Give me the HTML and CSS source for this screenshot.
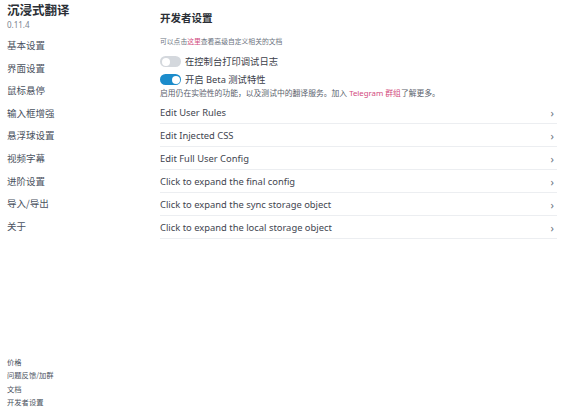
FILE: index.html
```html
<!DOCTYPE html>
<html lang="zh">
<head>
<meta charset="utf-8">
<link rel="stylesheet" href="styles.css">
</head>
<body>
<div class="app">
  <aside class="sidebar">
    <div class="brand">沉浸式翻译</div>
    <div class="version">0.11.4</div>
    <nav class="menu">
      <div class="menu-item">基本设置</div>
      <div class="menu-item">界面设置</div>
      <div class="menu-item">鼠标悬停</div>
      <div class="menu-item">输入框增强</div>
      <div class="menu-item">悬浮球设置</div>
      <div class="menu-item">视频字幕</div>
      <div class="menu-item">进阶设置</div>
      <div class="menu-item">导入/导出</div>
      <div class="menu-item">关于</div>
    </nav>
    <div class="foot">
      <div class="foot-item">价格</div>
      <div class="foot-item">问题反馈/加群</div>
      <div class="foot-item">文档</div>
      <div class="foot-item">开发者设置</div>
    </div>
  </aside>
  <main class="main">
    <h1 class="title">开发者设置</h1>
    <p class="hint">可以点击<span class="link">这里</span>查看高级自定义相关的文档</p>
    <label class="toggle-row">
      <span class="switch"><span class="knob"></span></span>
      <span>在控制台打印调试日志</span>
    </label>
    <label class="toggle-row">
      <span class="switch on"><span class="knob"></span></span>
      <span>开启 Beta 测试特性</span>
    </label>
    <p class="desc">启用仍在实验性的功能，以及测试中的翻译服务。加入 <span class="link">Telegram 群组</span>了解更多。</p>
    <div class="rows">
      <div class="row"><span>Edit User Rules</span><span class="chev">&#8250;</span></div>
      <div class="row"><span>Edit Injected CSS</span><span class="chev">&#8250;</span></div>
      <div class="row"><span>Edit Full User Config</span><span class="chev">&#8250;</span></div>
      <div class="row"><span>Click to expand the final config</span><span class="chev">&#8250;</span></div>
      <div class="row"><span>Click to expand the sync storage object</span><span class="chev">&#8250;</span></div>
      <div class="row"><span>Click to expand the local storage object</span><span class="chev">&#8250;</span></div>
    </div>
  </main>
</div>
</body>
</html>
```

FILE: styles.css
```css
html, body {
  margin: 0;
  padding: 0;
  background: #fff;
}
body {
  font-family: "Noto Sans", "Noto Sans CJK SC", sans-serif;
  color: #373c44;
}
.app {
  display: flex;
  width: 563px;
  height: 414px;
}
.sidebar {
  width: 153px;
  padding: 2px 0 4px 7px;
  box-sizing: border-box;
  display: flex;
  flex-direction: column;
}
.brand {
  font-family: "Noto Sans CJK SC", sans-serif;
  font-weight: 700;
  font-size: 12.5px;
  line-height: 16px;
  color: #2b2f36;
}
.version {
  font-size: 8px;
  line-height: 12px;
  color: #7b8490;
  margin-top: 1px;
}
.menu {
  display: flex;
  flex-direction: column;
  margin-top: 3px;
}
.menu-item {
  font-family: "Noto Sans CJK SC", sans-serif;
  font-size: 9.5px;
  line-height: 22.6px;
  color: #4a5260;
}
.foot {
  margin-top: auto;
  display: flex;
  flex-direction: column;
}
.foot-item {
  font-family: "Noto Sans CJK SC", sans-serif;
  font-size: 7.3px;
  line-height: 13.6px;
  color: #4a5260;
}
.main {
  flex: 1;
  padding: 10px 6px 0 7px;
  display: flex;
  flex-direction: column;
}
.title {
  margin: 0;
  font-family: "Noto Sans CJK SC", sans-serif;
  font-size: 10.5px;
  font-weight: 700;
  line-height: 16px;
  color: #2b2f36;
}
.hint {
  margin: 10px 0 0;
  font-family: "Noto Sans CJK SC", sans-serif;
  font-size: 6.8px;
  line-height: 10px;
  color: #6b7380;
}
.link {
  color: #d24b7e;
}
.toggle-row {
  display: flex;
  align-items: center;
  gap: 4px;
  font-family: "Noto Sans", "Noto Sans CJK SC", sans-serif;
  font-size: 9.3px;
  line-height: 13px;
  color: #3b4049;
  margin-top: 9px;
}
.toggle-row + .toggle-row {
  margin-top: 5px;
}
.switch {
  width: 21px;
  height: 11px;
  border-radius: 6px;
  background: #d4d8dd;
  display: flex;
  align-items: center;
  padding: 0 1.5px;
  box-sizing: border-box;
}
.knob {
  width: 8px;
  height: 8px;
  border-radius: 50%;
  background: #fff;
}
.switch.on {
  background: #1c8ccb;
  justify-content: flex-end;
}
.desc {
  margin: 2px 0 0;
  font-family: "Noto Sans", "Noto Sans CJK SC", sans-serif;
  font-size: 7.8px;
  line-height: 11px;
  color: #5a616c;
}
.rows {
  display: flex;
  flex-direction: column;
  margin-top: 2px;
}
.row {
  display: flex;
  justify-content: space-between;
  align-items: center;
  height: 23px;
  border-bottom: 1px solid #eceef1;
  box-sizing: border-box;
  font-size: 9.4px;
  color: #3f4550;
  padding-right: 3px;
}
.chev {
  font-size: 11px;
  color: #6b7380;
}
```
